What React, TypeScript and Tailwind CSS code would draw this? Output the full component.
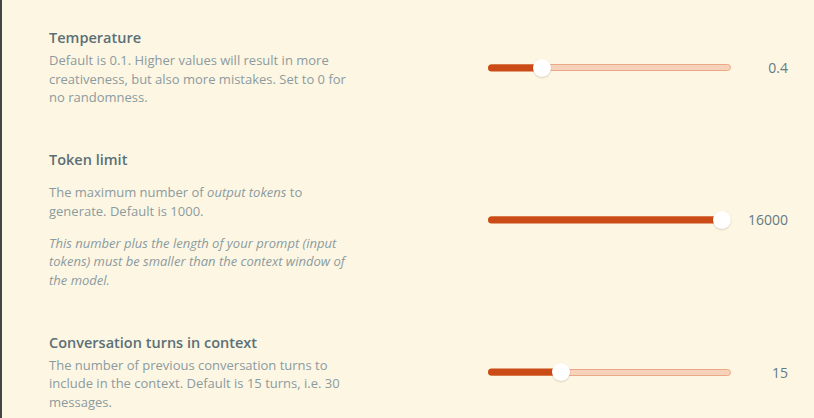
import { ReactNode } from 'react';

type Setting = {
  title: string;
  body: ReactNode;
  value: number;
  min: number;
  max: number;
};

const settings: Setting[] = [
  {
    title: 'Temperature',
    body: (
      <p className="mt-[3px]">
        Default is 0.1. Higher values will result in more creativeness, but also more mistakes. Set to 0 for no randomness.
      </p>
    ),
    value: 0.4,
    min: 0,
    max: 2,
  },
  {
    title: 'Token limit',
    body: (
      <>
        <p className="mt-[13px]">
          The maximum number of <em>output tokens</em> to generate. Default is 1000.
        </p>
        <p className="mt-[13px] italic">
          This number plus the length of your prompt (input tokens) must be smaller than the context window of the model.
        </p>
      </>
    ),
    value: 16000,
    min: 0,
    max: 16000,
  },
  {
    title: 'Conversation turns in context',
    body: (
      <p className="mt-[3px]">
        The number of previous conversation turns to include in the context. Default is 15 turns, i.e. 30 messages.
      </p>
    ),
    value: 15,
    min: 1,
    max: 50,
  },
];

function Slider({ value, min, max }: { value: number; min: number; max: number }) {
  const ratio = (value - min) / (max - min);
  // thumb center travels between 9px and width-9px
  const pos = `calc(9px + (100% - 18px) * ${ratio})`;
  return (
    <div className="relative h-[18px] w-[243px] flex items-center">
      <div className="h-[7px] w-full rounded-full bg-[#f6d2ba] border border-[#eaa887]" />
      <div
        className="absolute left-0 top-1/2 -translate-y-1/2 h-[7px] rounded-full bg-[#cb4b16]"
        style={{ width: pos }}
      />
      <div
        className="absolute top-1/2 -translate-x-1/2 -translate-y-1/2 h-[18px] w-[18px] rounded-full bg-white shadow-[0_1px_2px_rgba(0,0,0,0.15)]"
        style={{ left: pos }}
      />
    </div>
  );
}

export default function App() {
  return (
    <div
      className="min-h-[418px] w-full bg-[#fdf6e3] border-l-2 border-[#454545] pt-[28px] pl-[47px] pr-[26px]"
      style={{ fontFamily: '"Open Sans", "Noto Sans", sans-serif' }}
    >
      <div className="flex flex-col gap-[43px]">
        {settings.map((s) => (
          <div key={s.title} className="flex items-center">
            <div className="w-[305px] shrink-0">
              <h3 className="text-[14.5px] leading-[20px] font-semibold text-[#5b7076]">{s.title}</h3>
              <div className="text-[13px] leading-[18.7px] text-[#8b9b9f]">{s.body}</div>
            </div>
            <div className="ml-auto flex items-center">
              <Slider value={s.value} min={s.min} max={s.max} />
              <div className="w-[57px] text-right text-[14px] text-[#657b83]">{s.value}</div>
            </div>
          </div>
        ))}
      </div>
    </div>
  );
}
